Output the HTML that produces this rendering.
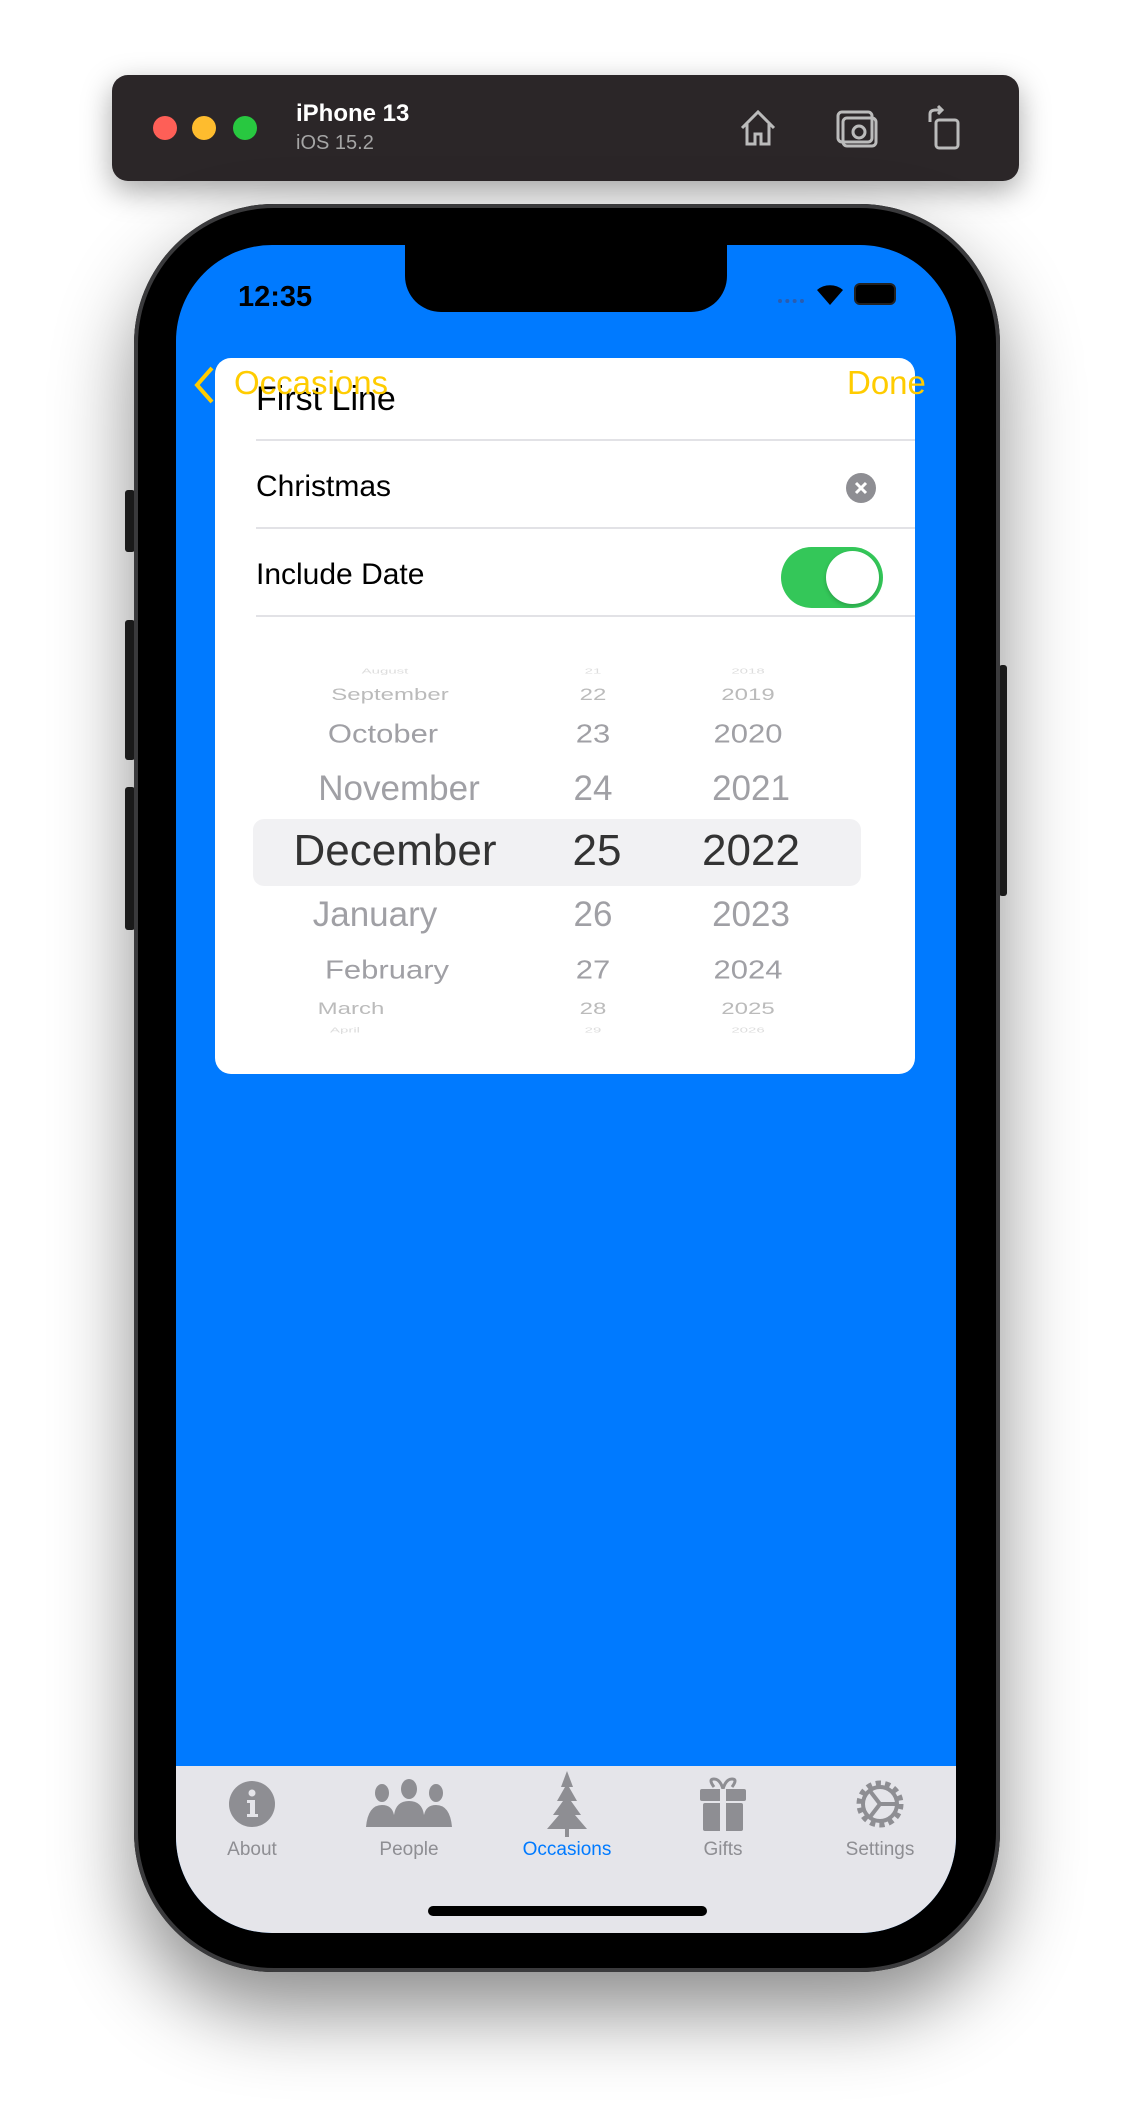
<!DOCTYPE html>
<html><head><meta charset="utf-8"><style>
*{margin:0;padding:0;box-sizing:border-box}
body{width:1128px;height:2124px;background:#fff;position:relative;overflow:hidden;font-family:"Liberation Sans",sans-serif}
.abs{position:absolute}
.tb{left:112px;top:75px;width:907px;height:106px;background:#2b2628;border-radius:16px;box-shadow:0 10px 30px rgba(0,0,0,.35)}
.dot{width:24px;height:24px;border-radius:50%;top:116px}
.phone{left:134px;top:204px;width:866px;height:1768px;background:#000;border-radius:140px;box-shadow:0 40px 80px rgba(0,0,0,.45),inset 0 0 0 4px #3a3a3c}
.screen{left:176px;top:245px;width:780px;height:1688px;background:#007aff;border-radius:96px;overflow:hidden}
.btn{background:#222;border-radius:3px}
.card{left:39px;top:113px;width:700px;height:716px;background:#fff;border-radius:16px}
.sep{height:2px;background:#e2e2e6;left:41px;right:0}
.pk{position:absolute;transform:translate(-50%,-50%);white-space:nowrap}
.tab{position:absolute;top:1521px;height:168px;left:0;right:0;background:#e5e5ea}
.tl{position:absolute;top:73px;font-size:19px;color:#8e8e93;transform:translateX(-50%)}
</style></head><body>
<div class="abs tb"></div>
<div class="abs dot" style="left:153px;background:#fe5f57"></div>
<div class="abs dot" style="left:192px;background:#febc2e"></div>
<div class="abs dot" style="left:233px;background:#28c840"></div>
<div class="abs" style="left:296px;top:100px;color:#fff;font-weight:bold;font-size:24px">iPhone 13</div>
<div class="abs" style="left:296px;top:132px;color:#a5a5a5;font-size:20px">iOS 15.2</div>
<svg class="abs" style="left:736px;top:106px" width="44" height="44" viewBox="0 0 44 44" fill="none" stroke="#bbb" stroke-width="3"><path d="M6 22 L22 6 L38 22 M11 18 V38 H19 V28 H25 V38 H33 V18"/></svg>
<svg class="abs" style="left:834px;top:106px" width="46" height="44" viewBox="0 0 46 44" fill="none" stroke="#bbb" stroke-width="3"><rect x="4" y="6" width="34" height="30" rx="4"/><rect x="9" y="12" width="33" height="28" rx="4"/><circle cx="25" cy="26" r="6"/></svg>
<svg class="abs" style="left:926px;top:104px" width="40" height="48" viewBox="0 0 40 48" fill="none" stroke="#bbb" stroke-width="3"><rect x="10" y="16" width="22" height="28" rx="3"/><path d="M4 18 V10 Q4 6 10 6 H16 M12 2 L16 6 L12 10"/></svg>

<div class="abs btn" style="left:125px;top:490px;width:10px;height:62px"></div>
<div class="abs btn" style="left:125px;top:620px;width:10px;height:140px"></div>
<div class="abs btn" style="left:125px;top:787px;width:10px;height:143px"></div>
<div class="abs btn" style="left:999px;top:665px;width:8px;height:231px"></div>
<div class="abs phone"></div>
<div class="abs screen">
  <div class="abs" style="left:229px;top:-10px;width:322px;height:77px;background:#000;border-radius:0 0 36px 36px"></div>
  <div class="abs" style="left:62px;top:36px;font-size:29px;font-weight:bold;color:#000">12:35</div>
  <div class="abs" style="left:602px;top:54px;width:26px;height:5px;border-top:4px dotted #2a5db0"></div>
  <svg class="abs" style="left:638px;top:36px" width="32" height="26" viewBox="0 0 32 26"><path d="M16 24 L3 9 A20 20 0 0 1 29 9 Z" fill="#000"/></svg>
  <div class="abs" style="left:678px;top:38px;width:42px;height:22px;border:2px solid #222;border-radius:6px;background:#000"></div>
  <div class="card abs">
    <div class="abs" style="left:41px;top:22px;font-size:34px;color:#000">First Line</div>
    <div class="abs sep" style="top:81px"></div>
    <div class="abs" style="left:41px;top:112px;font-size:30px;color:#000">Christmas</div>
    <svg class="abs" style="left:631px;top:115px" width="30" height="30" viewBox="0 0 30 30"><circle cx="15" cy="15" r="15" fill="#8e8e93"/><path d="M10 10 L20 20 M20 10 L10 20" stroke="#fff" stroke-width="3"/></svg>
    <div class="abs sep" style="top:169px"></div>
    <div class="abs" style="left:41px;top:200px;font-size:30px;color:#000">Include Date</div>
    <div class="abs" style="left:566px;top:189px;width:102px;height:61px;border-radius:31px;background:#34c759"></div>
    <div class="abs" style="left:611px;top:193px;width:53px;height:53px;border-radius:50%;background:#fff;box-shadow:0 2px 4px rgba(0,0,0,.2)"></div>
    <div class="abs sep" style="top:257px"></div>
    <div class="abs" style="left:38px;top:461px;width:608px;height:67px;background:#f1f1f3;border-radius:11px"></div>
    <div style="position:absolute;left:0;top:0;width:700px;height:716px;color:#a0a0a5">
      <div class="pk" style="left:170px;top:313px;font-size:15px;color:#ddd;transform:translate(-50%,-50%) scaleY(.5)">August</div>
      <div class="pk" style="left:175px;top:337px;font-size:24px;transform:translate(-50%,-50%) scaleY(.7);color:#bbb">September</div>
      <div class="pk" style="left:168px;top:376px;font-size:31px;transform:translate(-50%,-50%) scaleY(.85)">October</div>
      <div class="pk" style="left:184px;top:431px;font-size:35px">November</div>
      <div class="pk" style="left:180px;top:493px;font-size:44px;color:#333">December</div>
      <div class="pk" style="left:160px;top:557px;font-size:35px">January</div>
      <div class="pk" style="left:172px;top:612px;font-size:31px;transform:translate(-50%,-50%) scaleY(.85)">February</div>
      <div class="pk" style="left:136px;top:651px;font-size:24px;transform:translate(-50%,-50%) scaleY(.7);color:#bbb">March</div>
      <div class="pk" style="left:130px;top:672px;font-size:15px;color:#ddd;transform:translate(-50%,-50%) scaleY(.5)">April</div>

      <div class="pk" style="left:378px;top:313px;font-size:15px;color:#ddd;transform:translate(-50%,-50%) scaleY(.5)">21</div>
      <div class="pk" style="left:378px;top:337px;font-size:24px;transform:translate(-50%,-50%) scaleY(.7);color:#bbb">22</div>
      <div class="pk" style="left:378px;top:376px;font-size:31px;transform:translate(-50%,-50%) scaleY(.85)">23</div>
      <div class="pk" style="left:378px;top:431px;font-size:35px">24</div>
      <div class="pk" style="left:382px;top:493px;font-size:44px;color:#333">25</div>
      <div class="pk" style="left:378px;top:557px;font-size:35px">26</div>
      <div class="pk" style="left:378px;top:612px;font-size:31px;transform:translate(-50%,-50%) scaleY(.85)">27</div>
      <div class="pk" style="left:378px;top:651px;font-size:24px;transform:translate(-50%,-50%) scaleY(.7);color:#bbb">28</div>
      <div class="pk" style="left:378px;top:672px;font-size:15px;color:#ddd;transform:translate(-50%,-50%) scaleY(.5)">29</div>

      <div class="pk" style="left:533px;top:313px;font-size:15px;color:#ddd;transform:translate(-50%,-50%) scaleY(.5)">2018</div>
      <div class="pk" style="left:533px;top:337px;font-size:24px;transform:translate(-50%,-50%) scaleY(.7);color:#bbb">2019</div>
      <div class="pk" style="left:533px;top:376px;font-size:31px;transform:translate(-50%,-50%) scaleY(.85)">2020</div>
      <div class="pk" style="left:536px;top:431px;font-size:35px">2021</div>
      <div class="pk" style="left:536px;top:493px;font-size:44px;color:#333">2022</div>
      <div class="pk" style="left:536px;top:557px;font-size:35px">2023</div>
      <div class="pk" style="left:533px;top:612px;font-size:31px;transform:translate(-50%,-50%) scaleY(.85)">2024</div>
      <div class="pk" style="left:533px;top:651px;font-size:24px;transform:translate(-50%,-50%) scaleY(.7);color:#bbb">2025</div>
      <div class="pk" style="left:533px;top:672px;font-size:15px;color:#ddd;transform:translate(-50%,-50%) scaleY(.5)">2026</div>
    </div>
  </div>
  <svg class="abs" style="left:16px;top:120px" width="24" height="40" viewBox="0 0 24 40"><path d="M20 3 L5 20 L20 37" fill="none" stroke="#ffcc00" stroke-width="4"/></svg>
  <div class="abs" style="left:58px;top:119px;font-size:33px;color:#ffcc00">Occasions</div>
  <div class="abs" style="left:671px;top:119px;font-size:33px;color:#ffcc00">Done</div>

  <div class="tab">
    <svg class="abs" style="left:53px;top:15px" width="46" height="46" viewBox="0 0 46 46"><circle cx="23" cy="23" r="23" fill="#8e8e93"/><circle cx="23" cy="12" r="3.5" fill="#e5e5ea"/><path d="M18 19 H26 V33 H29 V36 H18 V33 H21 V22 H18Z" fill="#e5e5ea"/></svg>
    <svg class="abs" style="left:190px;top:13px" width="86" height="50" viewBox="0 0 86 50" fill="#8e8e93"><ellipse cx="16" cy="14" rx="7" ry="9"/><ellipse cx="43" cy="10" rx="8" ry="10"/><ellipse cx="70" cy="14" rx="7" ry="9"/><path d="M0 48 Q2 26 16 26 Q26 26 28 36 Q30 22 43 22 Q56 22 58 36 Q60 26 70 26 Q84 26 86 48Z"/></svg>
    <svg class="abs" style="left:367px;top:5px" width="48" height="66" viewBox="0 0 48 66" fill="#8e8e93"><path d="M24 0 L30 16 L26 16 L34 30 L28 30 L38 44 L32 44 L44 58 L4 58 L16 44 L10 44 L20 30 L14 30 L22 16 L18 16Z"/><rect x="22" y="56" width="4" height="10"/></svg>
    <svg class="abs" style="left:524px;top:11px" width="46" height="54" viewBox="0 0 46 54" fill="#8e8e93"><path d="M14 10 Q8 2 14 2 Q20 2 23 12 Q26 2 32 2 Q38 2 32 10" fill="none" stroke="#8e8e93" stroke-width="3"/><rect x="0" y="12" width="46" height="12" rx="2"/><rect x="3" y="26" width="40" height="28" rx="2"/><rect x="20" y="12" width="6" height="42" fill="#e5e5ea"/></svg>
    <svg class="abs" style="left:678px;top:11px" width="52" height="54" viewBox="0 0 52 54" fill="none" stroke="#8e8e93" stroke-width="4"><circle cx="26" cy="27" r="20" stroke-dasharray="5 4" stroke-width="7"/><circle cx="26" cy="27" r="17"/><path d="M26 27 L43 27 M26 27 L16 14 M26 27 L16 40"/></svg>
    <div class="tl" style="left:76px">About</div>
    <div class="tl" style="left:233px">People</div>
    <div class="tl" style="left:391px;color:#007aff">Occasions</div>
    <div class="tl" style="left:547px">Gifts</div>
    <div class="tl" style="left:704px">Settings</div>
    <div class="abs" style="left:252px;top:140px;width:279px;height:10px;border-radius:5px;background:#000"></div>
  </div>
</div>
</body></html>
